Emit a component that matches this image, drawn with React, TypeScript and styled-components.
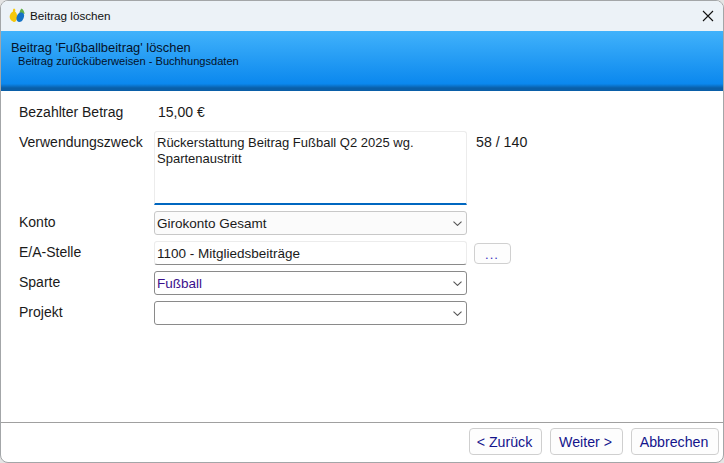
import React from 'react'
import styled, { createGlobalStyle } from 'styled-components'

const GlobalStyle = createGlobalStyle`
	html, body {
		margin: 0;
		padding: 0;
		width: 724px;
		height: 463px;
		overflow: hidden;
		background: #e4e4e4;
	}
	* {
		box-sizing: border-box;
	}
`

const Window = styled.div`
	width: 724px;
	height: 463px;
	display: flex;
	flex-direction: column;
	background: #ffffff;
	border: 1px solid #a3a6a8;
	border-radius: 8px;
	overflow: hidden;
	font-family: 'Liberation Sans', Arial, sans-serif;
	font-size: 14px;
	color: #1a1a1a;
`

const TitleBar = styled.div`
	height: 30px;
	flex: none;
	display: flex;
	align-items: center;
	padding: 0 9px 0 8px;
	background: #ecf2f7;
	font-size: 11.7px;
	color: #111;
`

const TitleText = styled.span`
	margin: -2px 0 0 5px;
	flex: 1;
`

const Banner = styled.div`
	height: 60px;
	flex: none;
	padding: 9px 10px 0;
	background: linear-gradient(#41b2fb 0%, #0b88ee 88%, #0a5fa8 95%, #0a5fa8 100%);
	color: #04122a;
`

const BannerTitle = styled.div`
	font-size: 12.9px;
	line-height: 15px;
`

const BannerSub = styled.div`
	font-size: 11.1px;
	line-height: 13px;
	margin-left: 7px;
`

const Body = styled.div`
	flex: 1;
	padding: 11px 0 0 18px;
`

const Form = styled.div`
	display: grid;
	grid-template-columns: 135px 313px auto;
	row-gap: 6px;
	align-items: start;
	justify-content: start;
`

const AmountRow = styled.div`
	grid-column: 1 / 4;
	display: grid;
	grid-template-columns: 135px auto;
	height: 23px;
	line-height: 21px;
`

const Amount = styled.div`
	padding-left: 4px;
`

const Label = styled.div`
	line-height: 22px;
	height: 24px;
`

const TopLabel = styled(Label)`
	line-height: 24px;
	margin-top: -1px;
`

const TextArea = styled.div`
	height: 74px;
	padding: 3px 2px;
	font-size: 13px;
	line-height: 16px;
	background: #ffffff;
	border: 1px solid #ececec;
	border-bottom: 2px solid #0067c0;
	border-radius: 3px 3px 0 0;
`

const Counter = styled.div`
	padding: 3px 0 0 9px;
	line-height: 17px;
	font-size: 14.2px;
`

const Combo = styled.div<{ $strong?: boolean; $accent?: boolean }>`
	height: 24px;
	display: flex;
	align-items: center;
	justify-content: space-between;
	padding: 0 4px 0 2px;
	font-size: 13.5px;
	background: ${p => (p.$strong ? '#ffffff' : '#fbfbfb')};
	border: 1px solid ${p => (p.$strong ? '#8a8a8a' : '#c8c8c8')};
	border-radius: 3px;
	color: ${p => (p.$accent ? '#3b0f8c' : '#1a1a1a')};
`

const Input = styled.div`
	height: 24px;
	display: flex;
	align-items: center;
	padding: 0 2px;
	font-size: 13.5px;
	background: #ffffff;
	border: 1px solid #ececec;
	border-bottom: 1px solid #8a8a8a;
	border-radius: 3px;
`

const Chevron = styled.svg`
	width: 9px;
	height: 5px;
	flex: none;
`

const SideCell = styled.div`
	padding-left: 7px;
`

const DotsButton = styled.div`
	width: 37px;
	height: 21px;
	margin-top: 2px;
	padding: 2px 1px 0 0;
	display: flex;
	align-items: center;
	justify-content: center;
	border: 1px solid #d0d0d0;
	border-radius: 4px;
	background: #fdfdfd;
	color: #3a2fc0;
	font-size: 13px;
	letter-spacing: 1px;
`

const Footer = styled.div`
	height: 40px;
	flex: none;
	display: flex;
	justify-content: flex-end;
	gap: 8px;
	padding: 5px 4px 0 0;
	border-top: 1px solid #a0a0a0;
`

const FooterButton = styled.div<{ $width: number }>`
	width: ${p => p.$width}px;
	height: 27px;
	padding-right: 2px;
	display: flex;
	align-items: center;
	justify-content: center;
	font-size: 14.2px;
	background: #fdfdfd;
	border: 1px solid #cfcfcf;
	border-radius: 4px;
	color: #14148c;
`

const ChevronIcon = () => (
	<Chevron viewBox="0 0 9 5">
		<path d="M0.5 0.6 L4.5 4.4 L8.5 0.6" fill="none" stroke="#555" strokeWidth="1.1" />
	</Chevron>
)

const AppLogo = () => (
	<svg width="16" height="16" viewBox="0 0 16 16">
		<path d="M5 0.5 C6.5 1 6.7 2.5 6 3.5 C7.5 4.5 8.5 7 8 10 C7.5 13.5 5.5 15 4 13.5 C1.5 12.5 0 9.5 1 7 C1.5 5 3 4 4 3.5 C3.8 2.5 4 1 5 0.5 Z" fill="#f6c80c" />
		<path d="M12.5 0.5 C14.5 1.5 15.5 4 15.5 6 L10.5 5 C10.5 3.5 11.5 1.5 12.5 0.5 Z" fill="#62b04a" />
		<path d="M11 4.5 C13.5 4 15.8 5.5 15 8.5 C14.5 11 13 14 10.5 14 C8.5 14 7 12 7.5 9.5 C8 7 9.5 5 11 4.5 Z" fill="#1573c6" />
	</svg>
)

const App = (): JSX.Element => {
	return (
		<>
			<GlobalStyle />
			<Window>
				<TitleBar>
					<AppLogo />
					<TitleText>Beitrag löschen</TitleText>
					<svg width="12" height="12" viewBox="0 0 12 12">
						<path d="M1 1 L11 11 M11 1 L1 11" stroke="#111" strokeWidth="1.1" />
					</svg>
				</TitleBar>
				<Banner>
					<BannerTitle>Beitrag 'Fußballbeitrag' löschen</BannerTitle>
					<BannerSub>Beitrag zurücküberweisen - Buchhungsdaten</BannerSub>
				</Banner>
				<Body>
					<Form>
						<AmountRow>
							<div>Bezahlter Betrag</div>
							<Amount>15,00 €</Amount>
						</AmountRow>

						<TopLabel>Verwendungszweck</TopLabel>
						<TextArea>
							Rückerstattung Beitrag Fußball Q2 2025 wg.
							<br />
							Spartenaustritt
						</TextArea>
						<Counter>58 / 140</Counter>

						<Label>Konto</Label>
						<Combo>
							Girokonto Gesamt
							<ChevronIcon />
						</Combo>
						<span />

						<Label>E/A-Stelle</Label>
						<Input>1100 - Mitgliedsbeiträge</Input>
						<SideCell>
							<DotsButton>...</DotsButton>
						</SideCell>

						<Label>Sparte</Label>
						<Combo $strong $accent>
							Fußball
							<ChevronIcon />
						</Combo>
						<span />

						<Label>Projekt</Label>
						<Combo $strong>
							<span />
							<ChevronIcon />
						</Combo>
						<span />
					</Form>
				</Body>
				<Footer>
					<FooterButton $width={73}>&lt; Zurück</FooterButton>
					<FooterButton $width={73}>Weiter &gt;</FooterButton>
					<FooterButton $width={88}>Abbrechen</FooterButton>
				</Footer>
			</Window>
		</>
	)
}

export default App
